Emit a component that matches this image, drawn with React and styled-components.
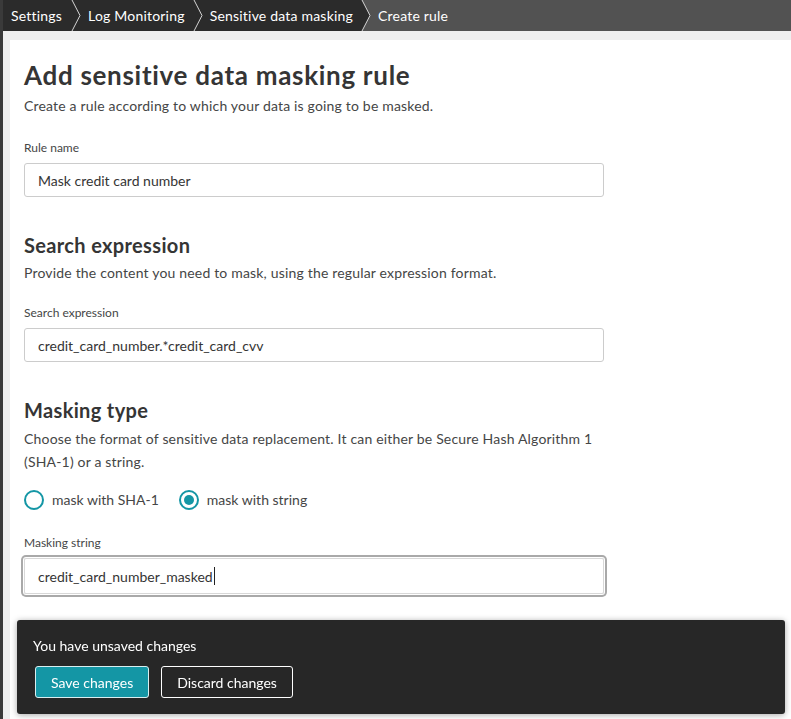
import React from 'react';
import styled, { createGlobalStyle } from 'styled-components';

const GlobalStyle = createGlobalStyle`
  body {
    margin: 0;
    background: #efefef;
    font-family: 'Lato', 'Liberation Sans', sans-serif;
    color: #353535;
  }
`;

const crumbs = ['Settings', 'Log Monitoring', 'Sensitive data masking', 'Create rule'];

export default function App() {
  return (
    <>
      <GlobalStyle />
      <Page>
        <Breadcrumbs>
          {crumbs.map((c, i) => {
            const last = i === crumbs.length - 1;
            const beforeLast = i === crumbs.length - 2;
            return (
              <React.Fragment key={c}>
                <Crumb active={last} first={i === 0}>{c}</Crumb>
                {!last && (
                  <Chevron width="10" height="31" viewBox="0 0 10 31">
                    {beforeLast && <polygon points="1,0 9,15.5 1,31 10,31 10,0" fill="#525252" />}
                    <polyline points="1,0 9,15.5 1,31" fill="none" stroke="#d4d4d4" strokeWidth="1" />
                  </Chevron>
                )}
              </React.Fragment>
            );
          })}
        </Breadcrumbs>

        <Content>
          <Card>
            <Title>Add sensitive data masking rule</Title>
            <Description>Create a rule according to which your data is going to be masked.</Description>
            <Label top={24}>Rule name</Label>
            <TextInput defaultValue="Mask credit card number" />

            <SectionTitle>Search expression</SectionTitle>
            <Description>Provide the content you need to mask, using the regular expression format.</Description>
            <Label top={22}>Search expression</Label>
            <TextInput defaultValue="credit_card_number.*credit_card_cvv" />

            <SectionTitle>Masking type</SectionTitle>
            <Description wrap>
              Choose the format of sensitive data replacement. It can either be Secure Hash Algorithm 1 (SHA-1) or a string.
            </Description>
            <RadioGroup>
              <RadioOption>
                <RadioCircle />
                mask with SHA-1
              </RadioOption>
              <RadioOption>
                <RadioCircle checked />
                mask with string
              </RadioOption>
            </RadioGroup>
            <Label top={24}>Masking string</Label>
            <FocusedInput>
              credit_card_number_masked<Caret />
            </FocusedInput>
          </Card>
        </Content>

        <Toast>
          <ToastText>You have unsaved changes</ToastText>
          <ToastActions>
            <Button primary>Save changes</Button>
            <Button>Discard changes</Button>
          </ToastActions>
        </Toast>
      </Page>
    </>
  );
}

const Page = styled.div`
  height: 719px;
  overflow: hidden;
  display: flex;
  flex-direction: column;
  border-left: 3px solid #3a3a3a;
  box-sizing: border-box;
`;

const Breadcrumbs = styled.nav`
  height: 31px;
  margin-left: -3px;
  display: flex;
  align-items: stretch;
  background: #2b2b2b;
  flex-shrink: 0;
`;

const Crumb = styled.div`
  display: flex;
  align-items: center;
  padding: 0 ${p => (p.first ? '9px' : '8px')} 0 ${p => (p.first ? '11px' : '7px')};
  font-size: 14px;
  letter-spacing: 0.2px;
  color: #ffffff;
  white-space: nowrap;
  background: ${p => (p.active ? '#525252' : 'transparent')};
  flex: ${p => (p.active ? 1 : 'none')};
`;

const Chevron = styled.svg`
  display: block;
  flex-shrink: 0;
`;

const Content = styled.div`
  flex: 1;
  padding: 9px 0 0 7px;
`;

const Card = styled.div`
  background: #ffffff;
  height: 100%;
  padding: 19px 14px 0;
  box-sizing: border-box;
`;

const Title = styled.h1`
  margin: 0;
  font-size: 26px;
  line-height: 32px;
  font-weight: 700;
  letter-spacing: 0.7px;
  color: #353535;
`;

const SectionTitle = styled.h2`
  margin: 35px 0 0;
  font-size: 20px;
  line-height: 26px;
  font-weight: 700;
  letter-spacing: 0.35px;
  color: #353535;
`;

const Description = styled.p`
  margin: ${p => (p.wrap ? '4px' : '5px')} 0 0;
  font-size: 14px;
  line-height: ${p => (p.wrap ? '23px' : '20px')};
  letter-spacing: 0.18px;
  color: #454646;
  max-width: 590px;
`;

const Label = styled.div`
  margin-top: ${p => p.top}px;
  font-size: 12px;
  line-height: 16px;
  color: #454646;
`;

const TextInput = styled.input`
  display: block;
  margin-top: 7px;
  width: 580px;
  height: 34px;
  box-sizing: border-box;
  padding: 0 13px;
  border: 1px solid #cccccc;
  border-radius: 3px;
  font-family: inherit;
  font-size: 14px;
  color: #353535;
  outline: none;
`;

const FocusedInput = styled.div`
  margin-top: 7px;
  width: 580px;
  height: 36px;
  box-sizing: border-box;
  padding: 0 13px;
  display: flex;
  align-items: center;
  border: 1px solid #d8d8d8;
  border-radius: 2px;
  box-shadow: 0 0 0 1px #ffffff, 0 0 0 3px #a9a9a9;
  font-size: 14px;
  color: #353535;
`;

const Caret = styled.span`
  display: inline-block;
  width: 1px;
  height: 18px;
  background: #222;
  margin-left: 1px;
`;

const RadioGroup = styled.div`
  margin-top: 16px;
  display: flex;
  gap: 20px;
`;

const RadioOption = styled.label`
  display: flex;
  align-items: center;
  gap: 8px;
  font-size: 14px;
  line-height: 22px;
  color: #454646;
`;

const RadioCircle = styled.span`
  width: 20px;
  height: 20px;
  box-sizing: border-box;
  border: 2px solid #1496a5;
  border-radius: 50%;
  display: flex;
  align-items: center;
  justify-content: center;
  &::after {
    content: '';
    width: 10px;
    height: 10px;
    border-radius: 50%;
    background: ${p => (p.checked ? '#1496a5' : 'transparent')};
  }
`;

const Toast = styled.div`
  position: fixed;
  left: 17px;
  right: 6px;
  bottom: 5px;
  background: #272727;
  border-radius: 3px;
  padding: 17px 16px 16px;
  box-shadow: 0 1px 6px rgba(0, 0, 0, 0.35);
`;

const ToastText = styled.div`
  font-size: 14px;
  line-height: 18px;
  color: #ffffff;
`;

const ToastActions = styled.div`
  margin-top: 11px;
  margin-left: 2px;
  display: flex;
  gap: 12px;
`;

const Button = styled.button`
  height: 32px;
  padding: 0 15px;
  border-radius: 3px;
  border: 1px solid ${p => (p.primary ? '#d9eef0' : '#ffffff')};
  background: ${p => (p.primary ? '#1496a5' : 'transparent')};
  color: #ffffff;
  font-family: inherit;
  font-size: 14px;
`;
